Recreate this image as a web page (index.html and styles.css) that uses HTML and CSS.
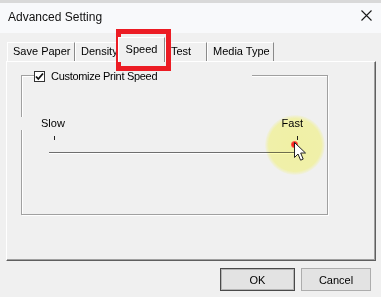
FILE: index.html
```html
<!DOCTYPE html>
<html lang="en">
<head>
    <meta charset="UTF-8">
    <title>Advanced Setting</title>
    <link rel="stylesheet" href="styles.css">
</head>
<body>
    <div class="dialog">
        <!-- Title bar -->
        <div class="titlebar">
            <span class="title">Advanced Setting</span>
            <svg class="close" width="11" height="11" viewBox="0 0 11 11">
                <path d="M0.5 0.5 L10.5 10.5 M10.5 0.5 L0.5 10.5" stroke="#1a1a1a" stroke-width="1.1" fill="none"/>
            </svg>
        </div>

        <!-- Tabs -->
        <div class="tabs">
            <div class="tab tab-save">Save Paper</div>
            <div class="tab tab-density">Density</div>
            <div class="tab tab-speed active">Speed</div>
            <div class="tab tab-test">Test</div>
            <div class="tab tab-media">Media Type</div>
        </div>

        <div class="panel">
            <div class="group">
                <div class="group-head">
                    <span class="check">
                        <svg width="9" height="9" viewBox="0 0 9 9">
                            <path d="M1 4.5 L3.3 7 L8 1.5" stroke="#111" stroke-width="1.8" fill="none"/>
                        </svg>
                    </span>
                    <span class="head-text">Customize Print Speed</span>
                </div>
                <div class="slider">
                    <div class="slider-labels">
                        <span class="slow">Slow</span>
                        <span>Fast</span>
                    </div>
                    <div class="ticks"><i></i><i></i></div>
                    <div class="track"></div>
                </div>
            </div>
        </div>

        <div class="buttons">
            <button class="btn btn-ok">OK</button>
            <button class="btn btn-cancel">Cancel</button>
        </div>

        <!-- Overlays: pointer highlight and red marker -->
        <div class="spot"></div>
        <div class="click"></div>
        <svg class="cursor" width="13" height="20" viewBox="0 0 13 20">
            <path d="M0.5 0.5 L0.5 15.5 L4 12 L6.6 18.2 L9.2 17.1 L6.7 11 L11.5 11 Z" fill="#fff" stroke="#222" stroke-width="1"/>
        </svg>
        <div class="marker"></div>
    </div>
</body>
</html>
```

FILE: styles.css
```css
/* page and dialog */
body {
    margin: 0;
    background-color: #d9d9d9;
    font-family: "Liberation Sans", Arial, sans-serif;
    font-size: 11px;
    color: #000;
}

.dialog {
    position: relative;
    width: 381px;
    height: 294px;
    margin-top: 3px;
    background-color: #f0f0f0;
    overflow: hidden;
}

.titlebar {
    height: 30px;
    box-sizing: border-box;
    padding: 0 9px 3px 8px;
    display: flex;
    align-items: center;
    justify-content: space-between;
    background-color: #f8f9fb;
}

.title {
    font-size: 12px;
    color: #111;
}

.close {
    margin-bottom: 2px;
}

/* tabs */
.tabs {
    height: 24px;
    margin-top: 4px;
    padding-left: 7px;
    display: flex;
    align-items: flex-end;
}

.tab {
    height: 19px;
    box-sizing: border-box;
    padding-left: 5px;
    line-height: 17px;
    background-color: #f0f0f0;
    border-top: 1px solid #fff;
    border-left: 1px solid #fff;
    border-right: 1px solid #8a8a8a;
    white-space: nowrap;
    overflow: hidden;
}

.tab-save { width: 68px; }
.tab-density { width: 43px; }
.tab-test { width: 42px; }
.tab-media { width: 67px; }

.tab.active {
    width: 47px;
    height: 25px;
    margin-bottom: -1px;
    padding-left: 0;
    line-height: 22px;
    text-align: center;
    position: relative;
    z-index: 1;
}

.panel {
    width: 370px;
    height: 200px;
    box-sizing: border-box;
    margin-left: 6px;
    border-top: 1px solid #fff;
    border-left: 1px solid #fff;
    border-right: 1px solid #5f5f5f;
    border-bottom: 1px solid #5f5f5f;
    box-shadow: inset -1px -1px 0 #a0a0a0;
    padding: 13px 0 0 14px;
}

/* group box */
.group {
    width: 307px;
    height: 140px;
    box-sizing: border-box;
    border: 1px solid #a0a0a0;
    box-shadow: inset 1px 1px 0 #fff, 1px 1px 0 #fff;
}

.group-head {
    width: 218px;
    height: 12px;
    margin: -6px 0 0 12px;
    display: flex;
    align-items: center;
    gap: 6px;
    background-color: #f0f0f0;
    line-height: 12px;
}

.head-text {
    letter-spacing: -0.3px;
}

.check {
    width: 11px;
    height: 11px;
    box-sizing: border-box;
    border: 1px solid #333;
    background-color: #fff;
    display: flex;
    align-items: center;
    justify-content: center;
}

/* slider */
.slider {
    width: 262px;
    margin: 35px 0 0 19px;
}

.slider-labels {
    display: flex;
    justify-content: space-between;
    line-height: 13px;
}

.slow {
    margin-left: -21px;
    padding-left: 21px;
    background-color: #f0f0f0;
}

.ticks {
    height: 4px;
    margin-top: 6px;
    padding: 0 5px 0 13px;
    display: flex;
    justify-content: space-between;
}

.ticks i {
    width: 1px;
    height: 4px;
    background-color: #222;
}

.track {
    width: 249px;
    height: 0;
    margin: 12px 0 0 8px;
    border-top: 1px solid #6e6e6e;
    border-bottom: 1px solid #fff;
}

/* buttons */
.buttons {
    margin-top: 7px;
    padding-right: 10px;
    display: flex;
    justify-content: flex-end;
    gap: 6px;
}

.btn {
    height: 23px;
    box-sizing: border-box;
    font-family: "Liberation Sans", Arial, sans-serif;
    font-size: 11px;
    color: #000;
    background-color: #e3e3e3;
    border: 1px solid #adadad;
    padding: 0;
}

.btn-ok {
    width: 75px;
    border-color: #4a4a4a;
    box-shadow: inset 0 0 0 1px #b5b5b5;
}

.btn-cancel {
    width: 70px;
}

/* overlays */
.spot {
    position: absolute;
    left: 265px;
    top: 112px;
    width: 60px;
    height: 60px;
    border-radius: 50%;
    mix-blend-mode: multiply;
    background: radial-gradient(circle, #ffffb0 0%, #ffffb4 62%, rgba(255, 255, 180, 0) 72%);
}

.click {
    position: absolute;
    left: 291px;
    top: 138px;
    width: 7px;
    height: 7px;
    border-radius: 50%;
    background: radial-gradient(circle, #ff2020 40%, rgba(255, 40, 40, 0.3) 100%);
}

.cursor {
    position: absolute;
    left: 294px;
    top: 139px;
}

.marker {
    position: absolute;
    left: 116px;
    top: 26px;
    width: 55px;
    height: 42px;
    box-sizing: border-box;
    border: 5px solid #ec1c24;
}
```
